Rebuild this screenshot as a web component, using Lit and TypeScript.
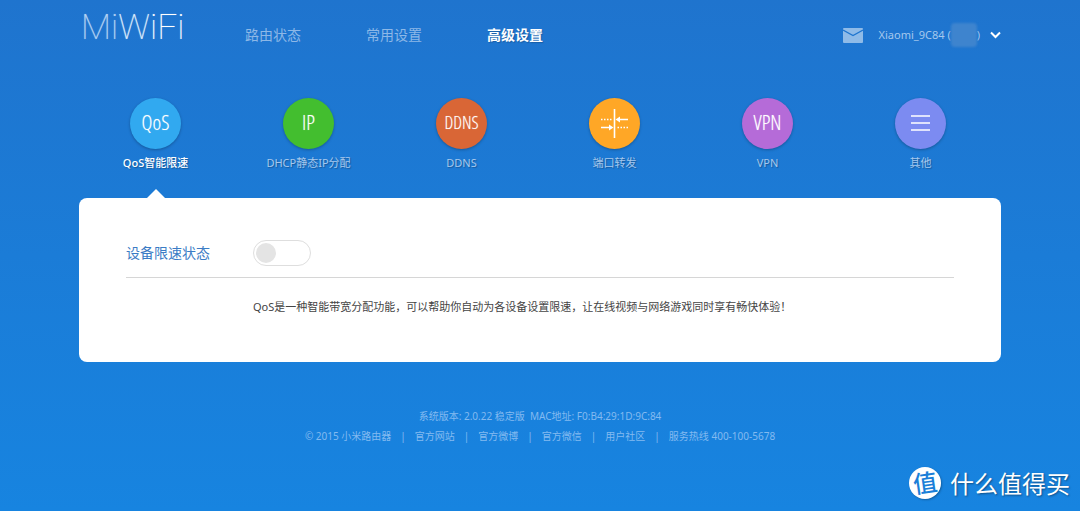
import { LitElement, html, css, svg } from "lit";
import { customElement, state } from "lit/decorators.js";
import { classMap } from "lit/directives/class-map.js";

interface Tab {
  id: string;
  label: string;
  tone: string;
  glyph: string;
}

const TABS: Tab[] = [
  { id: "qos", label: "QoS智能限速", tone: "sky", glyph: "QoS" },
  { id: "dhcp", label: "DHCP静态IP分配", tone: "green", glyph: "IP" },
  { id: "ddns", label: "DDNS", tone: "rust", glyph: "DDNS" },
  { id: "port", label: "端口转发", tone: "amber", glyph: "" },
  { id: "vpn", label: "VPN", tone: "violet", glyph: "VPN" },
  { id: "more", label: "其他", tone: "indigo", glyph: "" },
];

const NAV = ["路由状态", "常用设置", "高级设置"];
const LINKS = ["官方网站", "官方微博", "官方微信", "用户社区"];

const forwardArt = svg`
  <path d="M25.5 11V40" stroke="#fff" stroke-width="1.6" />
  <path d="M12 21.5H23M28.5 29.5H39" stroke="#fff" stroke-width="1.5" stroke-dasharray="1.5 1.5" />
  <path d="M39 21.5H29M12 29.5H22" stroke="#fff" stroke-width="1.7" />
  <path d="M26.5 21.5L31 18.6V24.4ZM24.5 29.5L20 26.6V32.4Z" fill="#fff" />`;

const menuArt = svg`
  <path d="M16 18H35M16 25H35M16 32H35" stroke="#fff" stroke-width="1.7" />`;

@customElement("app-root")
export class AppRoot extends LitElement {
  @state() private active = "qos";
  @state() private limited = false;

  static styles = css`
    :host {
      display: flex;
      flex-direction: column;
      box-sizing: border-box;
      min-height: 100vh;
      padding: 0 79px;
      background: linear-gradient(#1f74ce, #1784e0);
      font-family: "Noto Sans", "Noto Sans CJK SC", sans-serif;
      font-size: 11px;
      line-height: 20px;
      color: #fff;
      position: relative;
    }
    a { color: inherit; text-decoration: none; }
    button {
      font: inherit;
      color: inherit;
      background: none;
      border: 0;
      padding: 0;
      cursor: pointer;
    }
    svg { display: block; }
    .header {
      display: flex;
      align-items: center;
      height: 70px;
    }
    .logo {
      width: 166px;
      padding: 0 0 14px 2px;
      box-sizing: border-box;
      font: 100 35px/36px Roboto, sans-serif;
      color: #fff;
      text-shadow: 0 0 1px #fff8;
    }
    .logo .dim { color: #b4d2f2; }
    .logo .mid { color: #d8e8f9; }
    .nav {
      display: flex;
      gap: 65px;
      font-size: 14px;
    }
    .nav a { color: #8db8e7; }
    .nav a.on {
      color: #fff;
      font-weight: 700;
      text-shadow: 1px 1px 1px #0003;
    }
    .account {
      margin-left: auto;
      display: flex;
      align-items: center;
    }
    .mail { margin-right: 16px; }
    .user {
      display: flex;
      align-items: center;
      gap: 10px;
      color: #a5c8ed;
    }
    .name { display: flex; align-items: center; }
    .mask {
      width: 26px;
      height: 24px;
      border-radius: 4px;
      background: #3e84ce;
      filter: blur(1px);
    }
    .tabs {
      display: grid;
      grid-template-columns: repeat(6, 1fr);
      height: 128px;
      box-sizing: border-box;
      padding: 28px 4px 0 0;
    }
    .tab {
      display: flex;
      flex-direction: column;
      align-items: center;
      gap: 4px;
      color: #a6c8ed;
      text-shadow: 1px 1px 1px #0004;
    }
    .tab.on { color: #fff; font-weight: 500; }
    .tab.on::after {
      content: "";
      margin-top: 12px;
      border: solid transparent;
      border-width: 0 10px 10px;
      border-bottom-color: #fff;
    }
    .disc {
      width: 51px;
      height: 51px;
      border-radius: 50%;
      display: grid;
      place-items: center;
      box-shadow: 0 1px 3px #0004;
      color: #fff;
      text-shadow: 0 0 1px #fff8;
      font-family: "Open Sans Condensed Light", "Roboto Condensed", "Liberation Sans Narrow", "Noto Sans", sans-serif;
      font-size: 21px;
      font-weight: 300;
      line-height: 48px;
      align-content: start;
    }
    .sky { background: #31a9f0; }
    .green { background: #43be2f; }
    .rust { background: #d96636; font-size: 18px; }
    .amber { background: #ffa726; }
    .violet { background: #b56bd8; }
    .indigo { background: #7c8bf1; }
    .panel {
      background: #fff;
      border-radius: 8px;
      padding: 42px 47px 45px;
      color: #444;
    }
    .row {
      display: flex;
      align-items: center;
      padding-bottom: 11px;
      border-bottom: 1px solid #d6d6d6;
    }
    .row label {
      width: 127px;
      font-size: 14px;
      line-height: 26px;
      color: #3b7cc5;
    }
    .switch {
      appearance: none;
      margin: 0;
      width: 58px;
      height: 26px;
      box-sizing: border-box;
      border: 1px solid #dedede;
      border-radius: 13px;
      padding: 2px;
      display: flex;
      cursor: pointer;
    }
    .switch::before {
      content: "";
      width: 20px;
      height: 20px;
      border-radius: 50%;
      background: #e4e4e4;
    }
    .switch:checked { justify-content: flex-end; border-color: #31a9f0; }
    .switch:checked::before { background: #31a9f0; }
    .note { margin: 19px 0 0 127px; }
    .footer {
      margin-top: 44px;
      padding-bottom: 40px;
      text-align: center;
      font-size: 10px;
      color: #83baf0;
    }
    .footer p { margin: 0; }
    .version { white-space: pre; }
    .links {
      display: flex;
      justify-content: center;
      gap: 9px;
    }
    .stamp {
      position: absolute;
      right: 10px;
      bottom: 11px;
      display: flex;
      align-items: center;
      gap: 9px;
      font-size: 24px;
      line-height: 34px;
      font-family: "Noto Sans CJK SC", sans-serif;
      text-shadow: 1px 1px 2px #0006;
    }
    .seal {
      width: 32px;
      height: 32px;
      line-height: 30px;
      border-radius: 50%;
      text-align: center;
      background: #fff;
      color: #1b7fd8;
      font-weight: 500;
      text-shadow: none;
      box-shadow: 1px 1px 2px #0004;
    }
    .seal span { display: block; transform: rotate(-8deg); }
  `;

  private renderTab(tab: Tab) {
    const art = tab.id === "port" ? forwardArt : tab.id === "more" ? menuArt : null;
    return html`
      <button
        class=${classMap({ tab: true, on: tab.id === this.active })}
        @click=${() => (this.active = tab.id)}
      >
        <span class="disc ${tab.tone}">
          ${art
            ? html`<svg width="51" height="51" viewBox="0 0 51 51" fill="none">${art}</svg>`
            : tab.glyph}
        </span>
        <span>${tab.label}</span>
      </button>
    `;
  }

  render() {
    return html`
      <header class="header">
        <a class="logo" href="#"><span class="dim">Mi</span><span class="mid">W</span>iFi</a>
        <nav class="nav">
          ${NAV.map((t, i) => html`<a class=${classMap({ on: i === 2 })} href="#">${t}</a>`)}
        </nav>
        <div class="account">
          <a class="mail" href="#" aria-label="消息">
            <svg width="20" height="16" viewBox="0 0 20 16" fill="none">
              <rect y="1" width="20" height="15" rx="1" fill="#8fbbe8" />
              <path d="M0 3L10 8.5L20 3" stroke="#1e75cf" stroke-width="1.2" />
            </svg>
          </a>
          <button class="user">
            <span class="name">Xiaomi_9C84&nbsp;(<span class="mask"></span>)</span>
            <svg width="11" height="8" viewBox="0 0 11 8" fill="none">
              <path d="M1 1.5L5.5 6L10 1.5" stroke="#fff" stroke-width="2" />
            </svg>
          </button>
        </div>
      </header>
      <nav class="tabs">${TABS.map((t) => this.renderTab(t))}</nav>
      <main class="panel">
        <div class="row">
          <label for="limit">设备限速状态</label>
          <input
            id="limit"
            class="switch"
            type="checkbox"
            .checked=${this.limited}
            @change=${(e: Event) => (this.limited = (e.target as HTMLInputElement).checked)}
          />
        </div>
        <p class="note">QoS是一种智能带宽分配功能，可以帮助你自动为各设备设置限速，让在线视频与网络游戏同时享有畅快体验！</p>
      </main>
      <footer class="footer">
        <p class="version">系统版本: 2.0.22 稳定版  MAC地址: F0:B4:29:1D:9C:84</p>
        <div class="links">
          <span>© 2015 小米路由器</span>
          ${LINKS.map((t) => html`<span>|</span><a href="#">${t}</a>`)}
          <span>|</span><span>服务热线 400-100-5678</span>
        </div>
      </footer>
      <div class="stamp"><div class="seal"><span>值</span></div>什么值得买</div>
    `;
  }
}
